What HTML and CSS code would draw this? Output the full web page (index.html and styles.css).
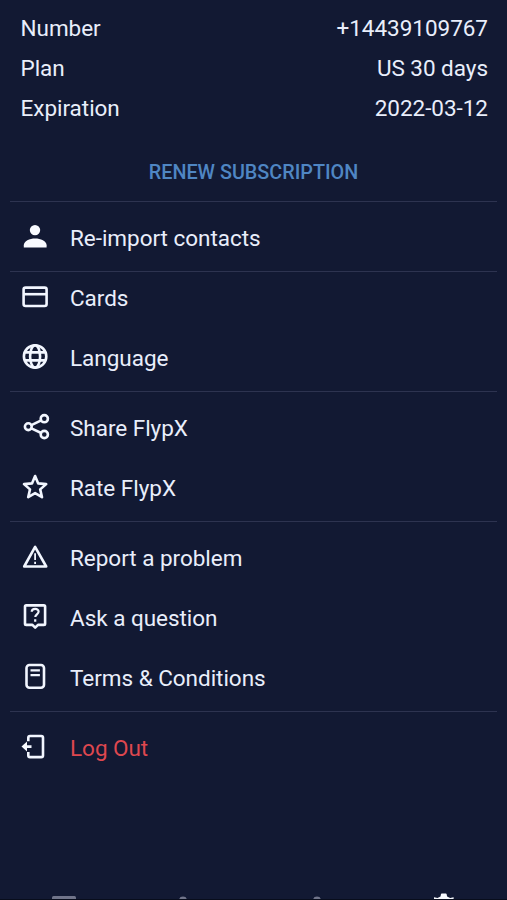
FILE: index.html
```html
<!DOCTYPE html>
<html lang="en">
<head>
<meta charset="utf-8">
<title>FlypX Settings</title>
<link rel="stylesheet" href="styles.css">
</head>
<body>
<main class="screen">
  <dl class="account">
    <div class="row"><dt>Number</dt><dd>+14439109767</dd></div>
    <div class="row"><dt>Plan</dt><dd>US 30 days</dd></div>
    <div class="row"><dt>Expiration</dt><dd>2022-03-12</dd></div>
  </dl>
  <button class="renew">RENEW SUBSCRIPTION</button>
  <nav class="menu">
    <section class="group">
      <a class="item"><svg class="icon" viewBox="0 0 30 30"><g class="solid"><circle cx="15" cy="7.1" r="5.2"/><path d="M3.800 24.500v-2.200c0-4.200 5.800-6.700 11.300-6.700s11.500 2.500 11.500 6.700v2.200z"/></g></svg><span>Re-import contacts</span></a>
    </section>
    <section class="group tight">
      <a class="item"><svg class="icon" viewBox="0 0 30 30"><rect x="3.6" y="4.6" width="23" height="18.4" rx="2"/><path d="M3.600 11.200h23"/></svg><span>Cards</span></a>
      <a class="item"><svg class="icon" viewBox="0 0 30 30"><circle cx="15.1" cy="13.4" r="11.2"/><ellipse cx="15.1" cy="13.4" rx="5" ry="11.2"/><path d="M5 9.400h20.200M5 17.400h20.200"/></svg><span>Language</span></a>
    </section>
    <section class="group">
      <a class="item"><svg class="icon" viewBox="0 0 30 30"><circle cx="8.3" cy="13.7" r="3.4"/><circle cx="24.3" cy="5.7" r="3.6"/><circle cx="24.3" cy="21.5" r="3.6"/><path d="M11.400 12.200 21.200 7.400M11.400 15.300l9.800 4.700"/></svg><span>Share FlypX</span></a>
      <a class="item"><svg class="icon" viewBox="0 0 30 30"><path d="m15.100 3 3.100 7.400 8 .7-6 5.300 1.800 7.800-6.900-4.100-6.900 4.100L10 16.400l-6-5.300 8-.7z"/></svg><span>Rate FlypX</span></a>
    </section>
    <section class="group">
      <a class="item"><svg class="icon" viewBox="0 0 30 30"><path d="M15.100 3.800 4.200 23.500h22z"/><path class="thin" d="M15.100 10.200v6.800M15.100 18.700v2.200"/></svg><span>Report a problem</span></a>
      <a class="item"><svg class="icon" viewBox="0 0 30 30"><path d="M6.200 2.400h17.700q1.200 0 1.200 1.200v17.100q0 1.200-1.200 1.200H18l-2.800 2.800-2.800-2.800H6.200Q5 21.900 5 20.700V3.600Q5 2.400 6.200 2.400z"/><path class="mark" d="M11.700 8.800c.2-3.900 6.900-3.800 6.900-.2 0 2.700-3.300 2.900-3.300 5.500M15.200 16.200v2.500"/></svg><span>Ask a question</span></a>
      <a class="item"><svg class="icon" viewBox="0 0 30 30"><rect x="6.500" y="2" width="17.500" height="22.800" rx="3"/><path class="mark" d="M10.500 7.300h9.400M10.500 12.200h9.400"/></svg><span>Terms &amp; Conditions</span></a>
    </section>
    <section class="group">
      <a class="item logout"><svg class="icon" viewBox="0 0 30 30"><path d="M8.300 8.200V4.700Q8.300 3 10 3h11.300Q23 3 23 4.700v17.700q0 1.700-1.700 1.700H10q-1.700 0-1.700-1.700v-3.400M11.500 13.600H4"/><path class="solid" d="m1.500 13.600 5.500-5v10z"/></svg><span>Log Out</span></a>
    </section>
  </nav>
  <footer class="tabs">
    <svg class="tab" viewBox="0 0 28 6"><rect x="2" y="3" width="24" height="10" rx="1.500"/></svg>
    <svg class="tab" viewBox="0 0 28 6"><circle cx="6" cy="7.600" r="4"/></svg>
    <svg class="tab" viewBox="0 0 28 6"><circle cx="14" cy="7.600" r="4"/></svg>
    <svg class="tab active" viewBox="0 0 28 6"><path d="M4 7V4.300l3.500.7 3-1.400.5-2.600q.1-.6.800-.6h4q.7 0 .8.600l.5 2.600 3 1.400 3.500-.7V7z"/></svg>
  </footer>
</main>
</body>
</html>
```
FILE: styles.css
```css
* { box-sizing: border-box; }

body {
  margin: 0;
  background: #121933;
  color: #e9eefb;
  font: 22.5px/40px Roboto, sans-serif;
  letter-spacing: -0.03px;
}

.screen {
  display: flex;
  flex-direction: column;
  height: 900px;
  overflow: hidden;
  padding-top: 8px;
  border-bottom: 1px solid #080d1c;
}

.account { margin: 0; padding: 0 19px 0 20.5px; }
.row { display: flex; justify-content: space-between; }
.row dd { margin: 0; }

.renew {
  height: 50px;
  margin: 20px 0 3px;
  padding: 0;
  border: 0;
  background: none;
  color: #4f86c3;
  font: 500 19.8px/50px Roboto, sans-serif;
}

.menu { padding: 0 10px; }

.group {
  display: flex;
  flex-direction: column;
  gap: 8px;
  padding: 10px 10px 7px;
  border-top: 1px solid #2d3350;
}
.group.tight { padding-top: 0; }

.item {
  display: flex;
  align-items: center;
  gap: 20px;
  height: 52px;
}
.item span { padding-bottom: 1px; }

.icon {
  width: 30px;
  height: 30px;
  fill: none;
  stroke: #f2f6ff;
  stroke-width: 2.6;
  stroke-linejoin: round;
}
.icon .solid { fill: #f8faff; stroke: none; }
.icon .thin { stroke-width: 1.8; }
.icon .mark { stroke-width: 2.2; }

.logout { color: #de474f; }

.tabs {
  display: flex;
  justify-content: space-between;
  margin-top: auto;
  padding: 0 49px 0 50px;
}
.tab { width: 28px; height: 6px; fill: #70748a; }
.tab.active { fill: #f8faff; }
```
